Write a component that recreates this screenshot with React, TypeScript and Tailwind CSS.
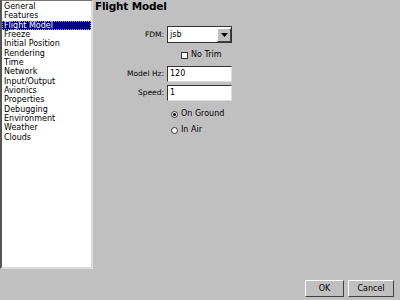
import React from "react";

const items = [
  "General",
  "Features",
  "Flight Model",
  "Freeze",
  "Initial Position",
  "Rendering",
  "Time",
  "Network",
  "Input/Output",
  "Avionics",
  "Properties",
  "Debugging",
  "Environment",
  "Weather",
  "Clouds",
];

export default function App() {
  return (
    <div
      className="w-[400px] h-[300px] bg-[#c0c0c0] flex flex-col text-black overflow-hidden"
      style={{ fontFamily: '"DejaVu Sans", sans-serif' }}
    >
      <div className="flex flex-1">
        <div className="w-[93px] h-[269px] bg-white border-l-2 border-t border-l-[#555] border-t-[#777] border-r-2 border-b-2 border-r-[#dcdcdc] border-b-[#dcdcdc] pt-[1px]">
          {items.map((it) => (
            <div
              key={it}
              className={
                "h-[9.35px] leading-[9.35px] text-[8px] pl-[2px] whitespace-nowrap " +
                (it === "Flight Model"
                  ? "bg-[#000080] text-white outline-1 outline-dotted outline-[#aaa] -outline-offset-1"
                  : "")
              }
            >
              {it}
            </div>
          ))}
        </div>
        <div className="flex-1 pl-[2px]">
          <div className="text-[10.5px] font-bold leading-[13px] tracking-[-0.2px]">Flight Model</div>
          <div className="flex items-center mt-[13px]">
            <div className="w-[72px] text-right text-[7.5px] pr-[3px]">FDM:</div>
            <div className="w-[65px] h-[17px] bg-white border border-[#333] flex items-center">
              <span className="text-[8px] pl-[2px] flex-1">jsb</span>
              <div className="w-[14px] h-[14px] bg-[#c0c0c0] border-t border-l border-white border-r border-b border-r-[#404040] border-b-[#404040] flex items-center justify-center">
                <svg width="7" height="4" viewBox="0 0 7 4"><polygon points="0,0 7,0 3.5,4" fill="black" /></svg>
              </div>
            </div>
          </div>
          <div className="flex items-center mt-[6px] pl-[86px]">
            <div className="w-[7px] h-[7px] bg-white border border-[#333]" />
            <span className="text-[8px] ml-[3px]">No Trim</span>
          </div>
          <div className="flex items-center mt-[5px]">
            <div className="w-[72px] text-right text-[7.5px] pr-[3px]">Model Hz:</div>
            <div className="w-[65px] h-[16px] bg-white border-t border-l border-[#333] border-r border-b border-r-[#ddd] border-b-[#ddd] text-[8px] pl-[2px] leading-[14px]">120</div>
          </div>
          <div className="flex items-center mt-[3px]">
            <div className="w-[72px] text-right text-[7.5px] pr-[3px]">Speed:</div>
            <div className="w-[65px] h-[16px] bg-white border-t border-l border-[#333] border-r border-b border-r-[#ddd] border-b-[#ddd] text-[8px] pl-[2px] leading-[14px]">1</div>
          </div>
          <div className="flex items-center mt-[7px] pl-[76px]">
            <div className="w-[7px] h-[7px] rounded-full bg-white border border-[#333] flex items-center justify-center">
              <div className="w-[3px] h-[3px] rounded-full bg-black" />
            </div>
            <span className="text-[8px] ml-[3px]">On Ground</span>
          </div>
          <div className="flex items-center mt-[4px] pl-[76px]">
            <div className="w-[7px] h-[7px] rounded-full bg-white border border-[#333]" />
            <span className="text-[8px] ml-[3px]">In Air</span>
          </div>
        </div>
      </div>
      <div className="flex justify-end gap-[4px] pr-[6px] pb-[3px]">
        <button className="w-[39px] h-[17px] bg-[#c0c0c0] border border-t-white border-l-white border-r-[#404040] border-b-[#404040] text-[8px]">OK</button>
        <button className="w-[46px] h-[17px] bg-[#c0c0c0] border border-t-white border-l-white border-r-[#404040] border-b-[#404040] text-[8px]">Cancel</button>
      </div>
    </div>
  );
}
